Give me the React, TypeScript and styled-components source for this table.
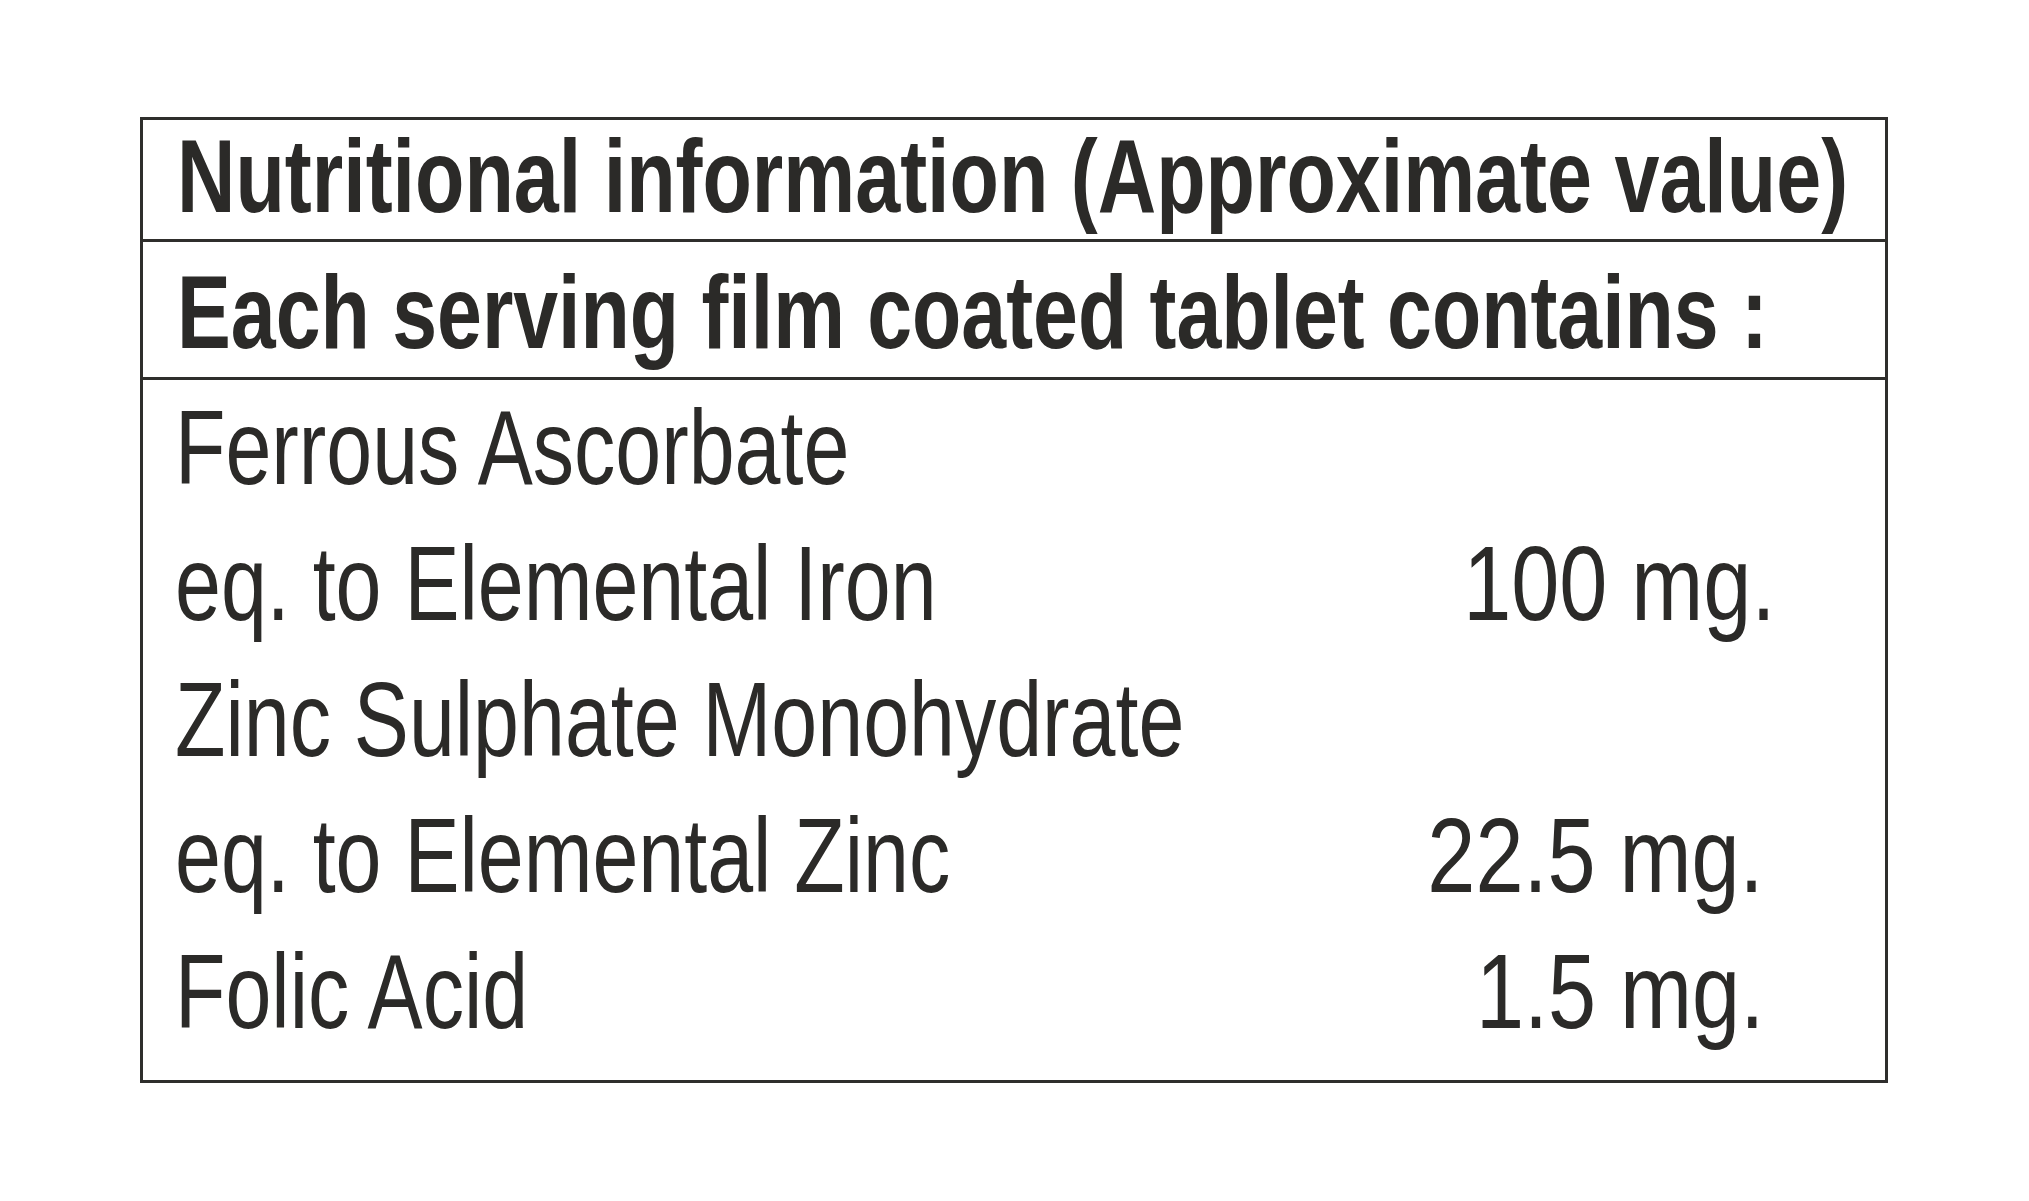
import styled, { createGlobalStyle } from "styled-components";

const GlobalStyle = createGlobalStyle`
    html,
    body {
        margin: 0;
        padding: 0;
        background-color: #ffffff;
    }
    body {
        font-family: "Liberation Sans", Arial, sans-serif;
        color: #2b2a28;
    }
`;

const Page = styled.div`
    padding: 117px 0 0 140px;
`;

const Panel = styled.div`
    width: 1748px;
    box-sizing: border-box;
    border: 3px solid #2f2e2c;
    overflow: hidden;
`;

const HeadRow = styled.div<{ $top: number; $bottom: number }>`
    padding: ${(p) => p.$top}px 0 ${(p) => p.$bottom}px 34px;
    border-bottom: 3px solid #2f2e2c;
    font-size: 103px;
    line-height: 103px;
    font-weight: 700;
    white-space: nowrap;
    overflow: hidden;
`;

// the label uses a condensed face, so squeeze a normal one
const Squeeze = styled.span<{ $x: number; $origin?: string }>`
    display: inline-block;
    transform: scaleX(${(p) => p.$x});
    transform-origin: ${(p) => p.$origin ?? "left"} center;
`;

const Body = styled.div`
    padding: 0 0 20px 32px;
    font-size: 105px;
    line-height: 136px;
`;

const Row = styled.div`
    display: grid;
    grid-template-columns: 1fr auto;
    white-space: nowrap;
`;

const Amount = styled.div<{ $right: number }>`
    text-align: right;
    padding-right: ${(p) => p.$right}px;
`;

interface Item {
    name: string;
    amount?: string;
    right?: number;
}

const items: Item[] = [
    { name: "Ferrous Ascorbate" },
    { name: "eq. to Elemental Iron", amount: "100 mg.", right: 110 },
    { name: "Zinc Sulphate Monohydrate" },
    { name: "eq. to Elemental Zinc", amount: "22.5 mg.", right: 121 },
    { name: "Folic Acid", amount: "1.5 mg.", right: 121 },
];

const App: React.FC = () => {
    return (
        <>
            <GlobalStyle />
            <Page>
                <Panel>
                    <HeadRow $top={5} $bottom={11}>
                        <Squeeze $x={0.785}>Nutritional information (Approximate value)</Squeeze>
                    </HeadRow>
                    <HeadRow $top={19} $bottom={13}>
                        <Squeeze $x={0.783}>Each serving film coated tablet contains :</Squeeze>
                    </HeadRow>
                    <Body>
                        {items.map((item) => (
                            <Row key={item.name}>
                                <div>
                                    <Squeeze $x={0.786}>{item.name}</Squeeze>
                                </div>
                                <Amount $right={item.right ?? 0}>
                                    {item.amount && (
                                        <Squeeze $x={0.823} $origin="right">
                                            {item.amount}
                                        </Squeeze>
                                    )}
                                </Amount>
                            </Row>
                        ))}
                    </Body>
                </Panel>
            </Page>
        </>
    );
};
export default App;
